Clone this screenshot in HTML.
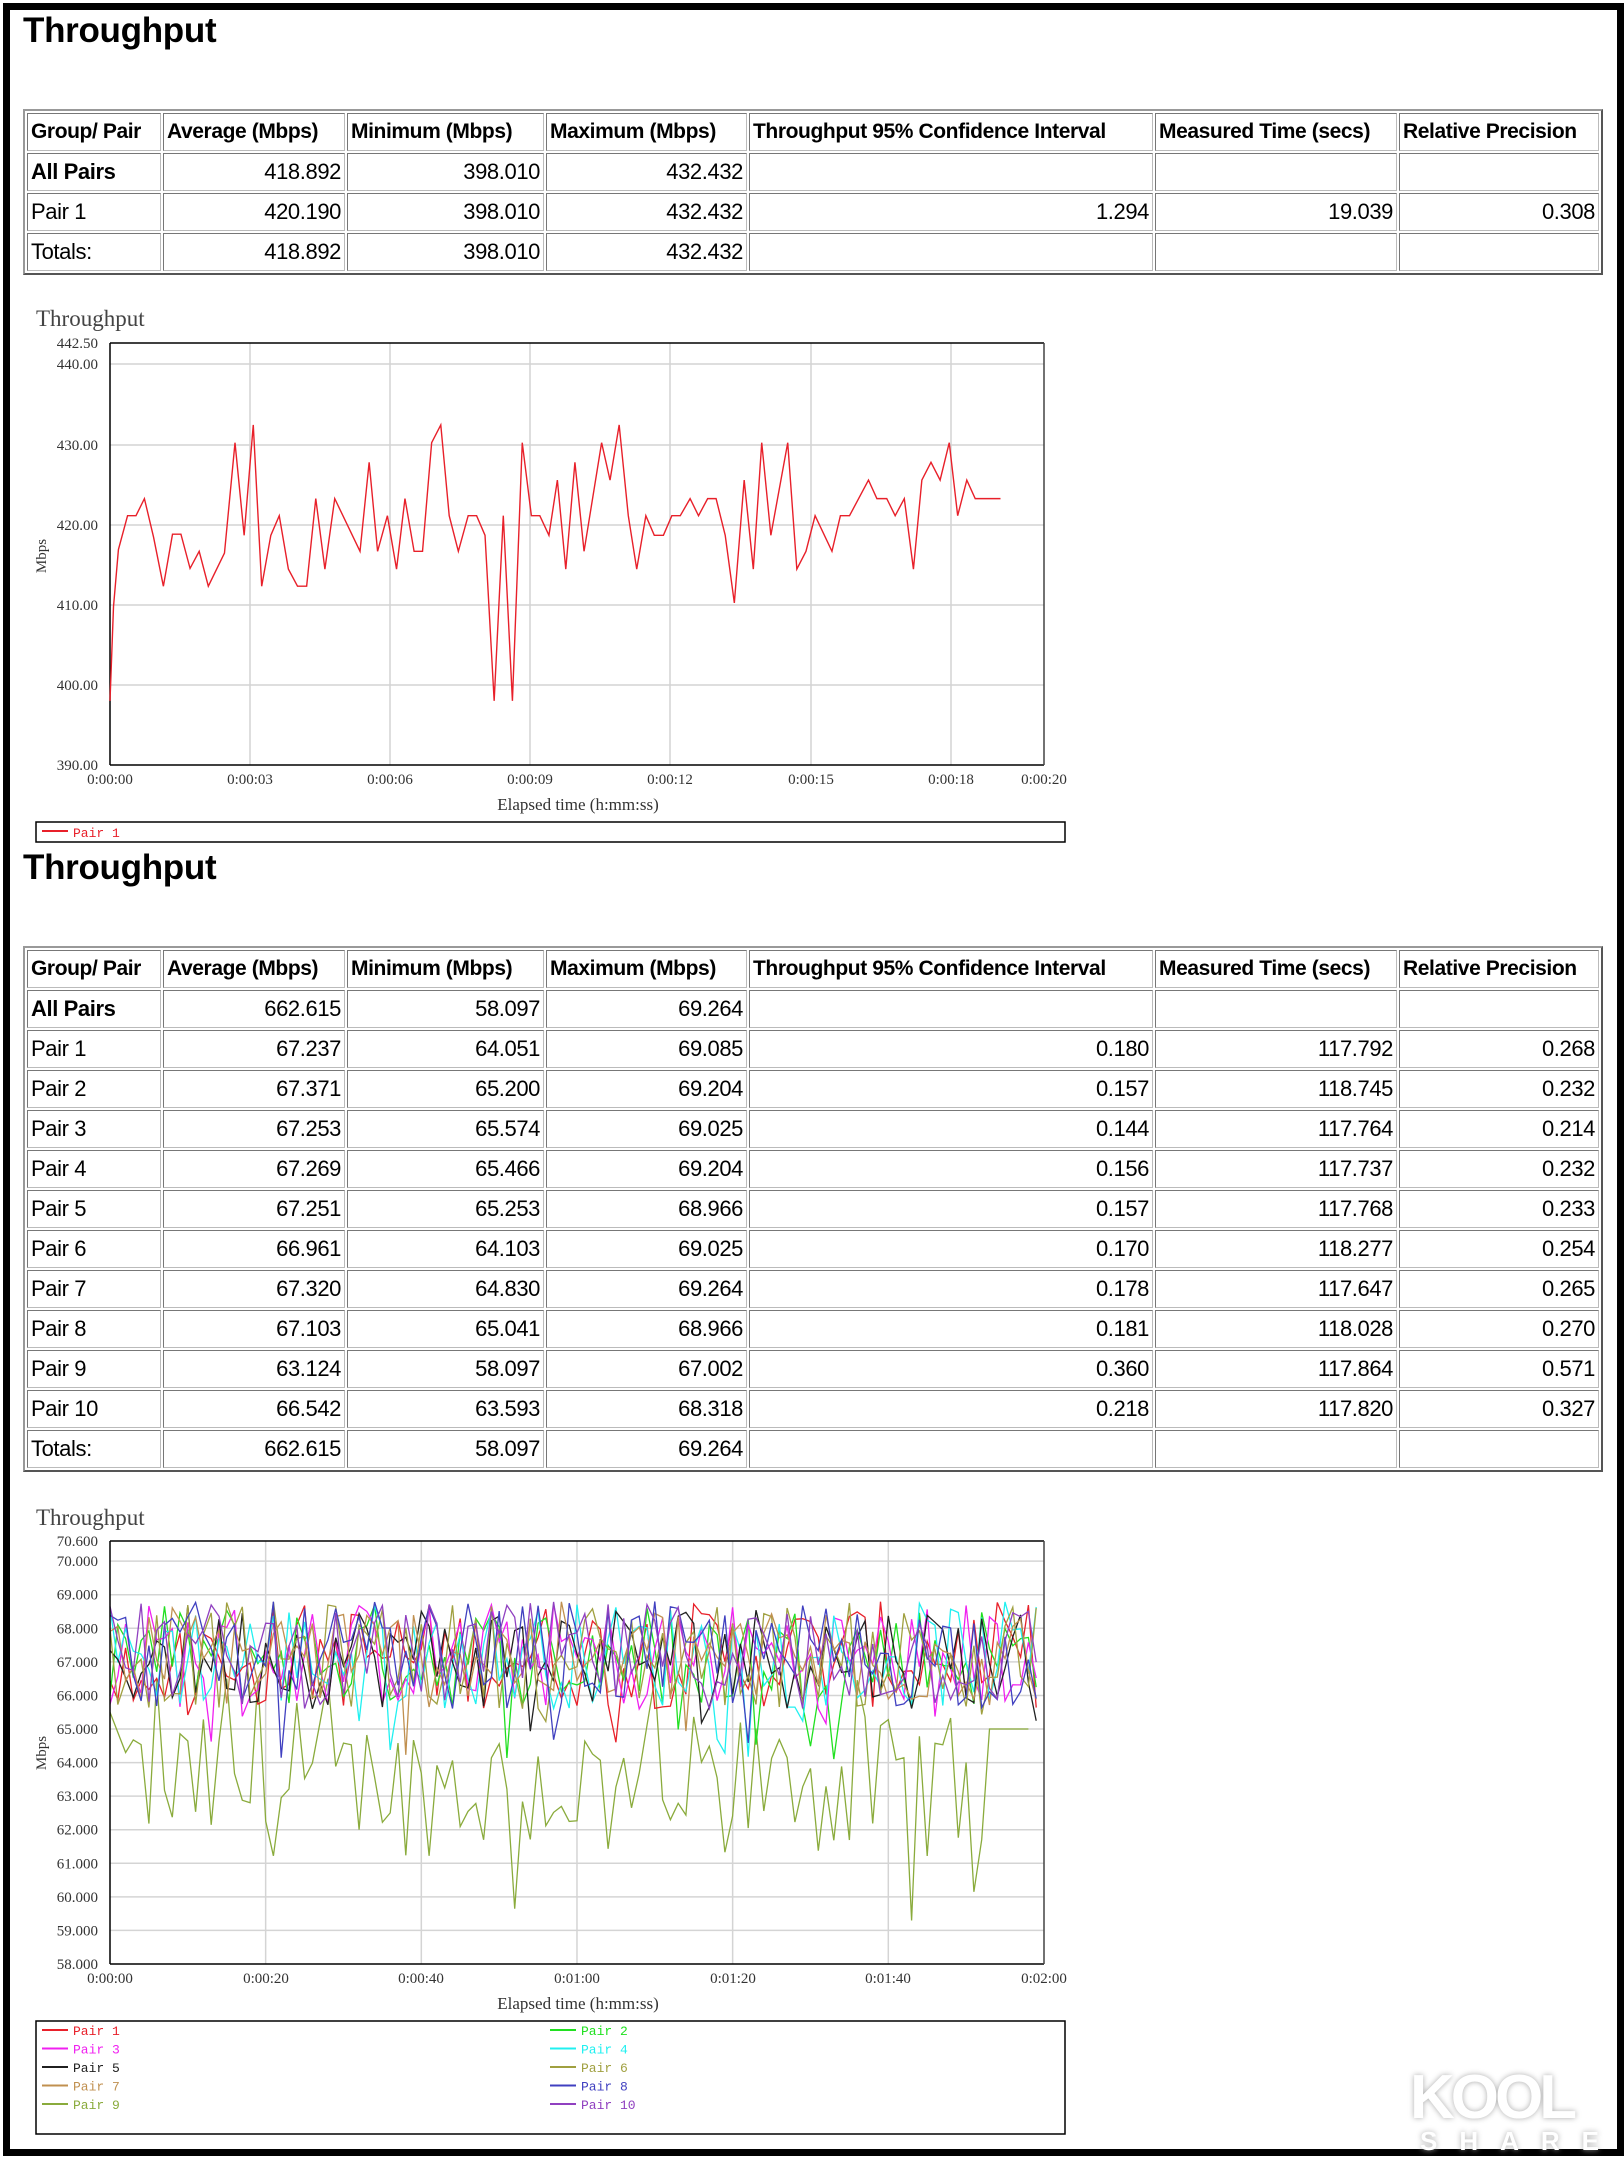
<!DOCTYPE html>
<html><head><meta charset="utf-8">
<style>
html,body{margin:0;padding:0;background:#fff;}
body{width:1624px;height:2159px;position:relative;overflow:hidden;font-family:"Liberation Sans",sans-serif;}
#frame{position:absolute;left:3px;top:3px;width:1607px;height:2139px;border:7px solid #000;}
h1{position:absolute;left:23px;margin:0;font-size:35px;font-weight:bold;color:#000;letter-spacing:-0.3px;}
table.t{position:absolute;left:23px;width:1578px;table-layout:fixed;border-collapse:separate;border-spacing:2px;border:2px solid #999;border-right-color:#555;border-bottom-color:#555;font-size:22px;}
table.t td{border:1px solid #777;border-right-color:#bbb;border-bottom-color:#bbb;height:36px;padding:0 3px;white-space:nowrap;overflow:hidden;text-align:right;letter-spacing:-0.4px;}
table.t td:first-child{text-align:left;}
table.t tr.h td{font-weight:bold;text-align:left;font-size:21px;}
.b{font-weight:bold;}
svg{position:absolute;left:0;top:0;}
</style></head><body>
<div id="frame"></div>
<h1 style="top:11px">Throughput</h1>
<table class="t" style="top:109px">
<colgroup><col style="width:134px"><col style="width:182px"><col style="width:197px"><col style="width:201px"><col style="width:404px"><col style="width:242px"><col style="width:200px"></colgroup>
<tr class="h"><td>Group/ Pair</td><td>Average (Mbps)</td><td>Minimum (Mbps)</td><td>Maximum (Mbps)</td><td>Throughput 95% Confidence Interval</td><td>Measured Time (secs)</td><td>Relative Precision</td></tr>
<tr><td class="b">All Pairs</td><td>418.892</td><td>398.010</td><td>432.432</td><td></td><td></td><td></td></tr>
<tr><td>Pair 1</td><td>420.190</td><td>398.010</td><td>432.432</td><td>1.294</td><td>19.039</td><td>0.308</td></tr>
<tr><td>Totals:</td><td>418.892</td><td>398.010</td><td>432.432</td><td></td><td></td><td></td></tr>
</table>

<h1 style="top:848px">Throughput</h1>
<table class="t" style="top:946px">
<colgroup><col style="width:134px"><col style="width:182px"><col style="width:197px"><col style="width:201px"><col style="width:404px"><col style="width:242px"><col style="width:200px"></colgroup>
<tr class="h"><td>Group/ Pair</td><td>Average (Mbps)</td><td>Minimum (Mbps)</td><td>Maximum (Mbps)</td><td>Throughput 95% Confidence Interval</td><td>Measured Time (secs)</td><td>Relative Precision</td></tr>
<tr><td class="b">All Pairs</td><td>662.615</td><td>58.097</td><td>69.264</td><td></td><td></td><td></td></tr>
<tr><td>Pair 1</td><td>67.237</td><td>64.051</td><td>69.085</td><td>0.180</td><td>117.792</td><td>0.268</td></tr>
<tr><td>Pair 2</td><td>67.371</td><td>65.200</td><td>69.204</td><td>0.157</td><td>118.745</td><td>0.232</td></tr>
<tr><td>Pair 3</td><td>67.253</td><td>65.574</td><td>69.025</td><td>0.144</td><td>117.764</td><td>0.214</td></tr>
<tr><td>Pair 4</td><td>67.269</td><td>65.466</td><td>69.204</td><td>0.156</td><td>117.737</td><td>0.232</td></tr>
<tr><td>Pair 5</td><td>67.251</td><td>65.253</td><td>68.966</td><td>0.157</td><td>117.768</td><td>0.233</td></tr>
<tr><td>Pair 6</td><td>66.961</td><td>64.103</td><td>69.025</td><td>0.170</td><td>118.277</td><td>0.254</td></tr>
<tr><td>Pair 7</td><td>67.320</td><td>64.830</td><td>69.264</td><td>0.178</td><td>117.647</td><td>0.265</td></tr>
<tr><td>Pair 8</td><td>67.103</td><td>65.041</td><td>68.966</td><td>0.181</td><td>118.028</td><td>0.270</td></tr>
<tr><td>Pair 9</td><td>63.124</td><td>58.097</td><td>67.002</td><td>0.360</td><td>117.864</td><td>0.571</td></tr>
<tr><td>Pair 10</td><td>66.542</td><td>63.593</td><td>68.318</td><td>0.218</td><td>117.820</td><td>0.327</td></tr>
<tr><td>Totals:</td><td>662.615</td><td>58.097</td><td>69.264</td><td></td><td></td><td></td></tr>
</table>

<svg id="s" width="1624" height="2159" xmlns="http://www.w3.org/2000/svg" font-family="Liberation Serif, serif">
<text x="36" y="326" font-size="23" fill="#444">Throughput</text>
<g stroke="#d4d4d4" stroke-width="1.5">
<line x1="110" y1="364" x2="1044" y2="364"/><line x1="110" y1="445" x2="1044" y2="445"/><line x1="110" y1="525" x2="1044" y2="525"/><line x1="110" y1="605" x2="1044" y2="605"/><line x1="110" y1="685" x2="1044" y2="685"/>
<line x1="250" y1="343" x2="250" y2="765"/><line x1="390" y1="343" x2="390" y2="765"/><line x1="530" y1="343" x2="530" y2="765"/><line x1="670" y1="343" x2="670" y2="765"/><line x1="811" y1="343" x2="811" y2="765"/><line x1="951" y1="343" x2="951" y2="765"/>
</g>
<g stroke="#000" stroke-width="1.5" fill="none">
<line x1="110" y1="343" x2="1044" y2="343"/><line x1="110" y1="765" x2="1044" y2="765"/><line x1="110" y1="343" x2="110" y2="765"/><line x1="1044" y1="343" x2="1044" y2="765" stroke="#444"/>
</g>
<g font-size="15" fill="#333" text-anchor="end">
<text x="98" y="348">442.50</text><text x="98" y="369">440.00</text><text x="98" y="450">430.00</text><text x="98" y="530">420.00</text><text x="98" y="610">410.00</text><text x="98" y="690">400.00</text><text x="98" y="770">390.00</text>
</g>
<g font-size="15" fill="#333" text-anchor="middle">
<text x="110" y="784">0:00:00</text><text x="250" y="784">0:00:03</text><text x="390" y="784">0:00:06</text><text x="530" y="784">0:00:09</text><text x="670" y="784">0:00:12</text><text x="811" y="784">0:00:15</text><text x="951" y="784">0:00:18</text><text x="1044" y="784">0:00:20</text>
<text x="578" y="810" font-size="17">Elapsed time (h:mm:ss)</text>
</g>
<text transform="translate(46,556) rotate(-90)" font-size="15" fill="#333" text-anchor="middle">Mbps</text>
<g transform="matrix(0.7023 0 0 0.3561 -2.37 300.27)">
<polyline vector-effect="non-scaling-stroke" fill="none" stroke="#e8202a" stroke-width="1.4" points="160,1125 165,860 172,700 185,605 197,605 209,557 222,665 236,803 249,657 261,657 274,753 287,705 300,803 323,710 338,400 351,660 364,350 376,803 389,660 401,605 414,755 427,803 440,803 453,557 466,755 480,557 516,705 529,455 541,705 555,605 568,755 580,557 593,705 605,705 618,400 631,350 643,605 656,705 670,605 682,605 694,660 707,1125 720,605 733,1125 747,400 760,605 772,605 785,660 797,505 809,755 822,455 835,705 860,400 872,505 885,350 898,605 910,755 923,605 935,660 948,660 960,605 972,605 986,557 998,605 1011,557 1023,557 1036,660 1049,850 1063,505 1076,755 1088,400 1101,660 1125,400 1138,755 1151,705 1164,605 1188,705 1200,605 1213,605 1240,505 1252,557 1266,557 1278,605 1291,557 1304,755 1316,505 1329,455 1342,505 1355,400 1367,605 1380,505 1392,557 1428,557"/>
</g>
<rect x="36" y="822" width="1029" height="20" fill="none" stroke="#000" stroke-width="1.5"/>
<line x1="42" y1="831" x2="68" y2="831" stroke="#e8202a" stroke-width="2"/>
<text x="73" y="837" font-size="13" fill="#e8202a" font-family="Liberation Mono, monospace">Pair 1</text>

<text x="36" y="1525" font-size="23" fill="#444">Throughput</text>
<g id="grid2" stroke="#d4d4d4" stroke-width="1.5"></g>
<g id="lines2"></g>
<g stroke="#000" stroke-width="1.5" fill="none">
<line x1="110" y1="1541" x2="1044" y2="1541"/><line x1="110" y1="1964" x2="1044" y2="1964"/><line x1="110" y1="1541" x2="110" y2="1964"/><line x1="1044" y1="1541" x2="1044" y2="1964" stroke="#444"/>
</g>
<g id="ylab2" font-size="15" fill="#333" text-anchor="end"><text x="98" y="1546">70.600</text></g>
<g font-size="15" fill="#333" text-anchor="middle">
<text x="110" y="1983">0:00:00</text><text x="266" y="1983">0:00:20</text><text x="421" y="1983">0:00:40</text><text x="577" y="1983">0:01:00</text><text x="733" y="1983">0:01:20</text><text x="888" y="1983">0:01:40</text><text x="1044" y="1983">0:02:00</text>
<text x="578" y="2009" font-size="17">Elapsed time (h:mm:ss)</text>
</g>
<text transform="translate(46,1753) rotate(-90)" font-size="15" fill="#333" text-anchor="middle">Mbps</text>
<rect x="36" y="2021" width="1029" height="113" fill="none" stroke="#000" stroke-width="1.5"/>
<g id="leg2" font-size="13" font-family="Liberation Mono, monospace"></g>
<g font-family="Liberation Sans, sans-serif" font-weight="bold" fill="#fff" style="filter:drop-shadow(0 0 3px #aaa)">
<text x="1410" y="2118" font-size="62" letter-spacing="-4">KOOL</text>
<text x="1420" y="2150" font-size="26" letter-spacing="22">SHARE</text>
</g>
</svg>
<script>
(function(){
var NS="http://www.w3.org/2000/svg";
function el(n,a,p,t){var e=document.createElementNS(NS,n);for(var k in a)e.setAttribute(k,a[k]);if(t)e.textContent=t;p.appendChild(e);return e;}
function Y(v){return 1964-(v-58)*33.57;}
function X(t){return 110+t*7.783;}
var g=document.getElementById('grid2'),yl=document.getElementById('ylab2');
for(var v=59;v<=70;v++){el('line',{x1:110,x2:1044,y1:Y(v),y2:Y(v)},g);}
for(var v=58;v<=70;v++){el('text',{x:98,y:Y(v)+5},yl,v+'.000');}
for(var t=20;t<120;t+=20){el('line',{x1:X(t),x2:X(t),y1:1541,y2:1964},g);}
var s=12345;function r(){s=(s*1103515245+12345)%2147483648;return s/2147483648;}
var cols=['#e8202a','#20e020','#f020f0','#20f0f0','#202020','#a0a040','#c09050','#4040c0','#8aab3c','#9040c0'];
var L=document.getElementById('lines2');
var order=[8,0,1,2,3,4,5,6,7,9];
order.forEach(function(i){
  var pts=[],v;
  if(i==8){
    for(var t=0;t<=118;t++){
      v=63.3+(r()-0.5)*4.2+ (r()<0.06?-3:0) + (r()<0.12?2:0);
      if(t<3)v=65.5-t*0.6; if(t>112)v=65;
      v=Math.max(58.2,Math.min(66.5,v));
      pts.push(X(t).toFixed(1)+','+Y(v).toFixed(1));
    }
  } else {
    for(var t=0;t<=119;t++){
      v=67.2+(r()-0.5)*3.2;
      if(r()<0.06)v-=1.5;
      v=Math.max(64,Math.min(69.3,v));
      pts.push(X(t).toFixed(1)+','+Y(v).toFixed(1));
    }
  }
  el('polyline',{points:pts.join(' '),fill:'none',stroke:cols[i],'stroke-width':1.3},L);
});
var lg=document.getElementById('leg2');
for(var i=0;i<10;i++){
  var c=i%2, rr=Math.floor(i/2);
  var x=c?550:42, y=2030+rr*18.5;
  el('line',{x1:x,x2:x+26,y1:y,y2:y,stroke:cols[i],'stroke-width':2},lg);
  el('text',{x:x+31,y:y+5,fill:cols[i]},lg,'Pair '+(i+1));
}
})();
</script>
</body></html>
